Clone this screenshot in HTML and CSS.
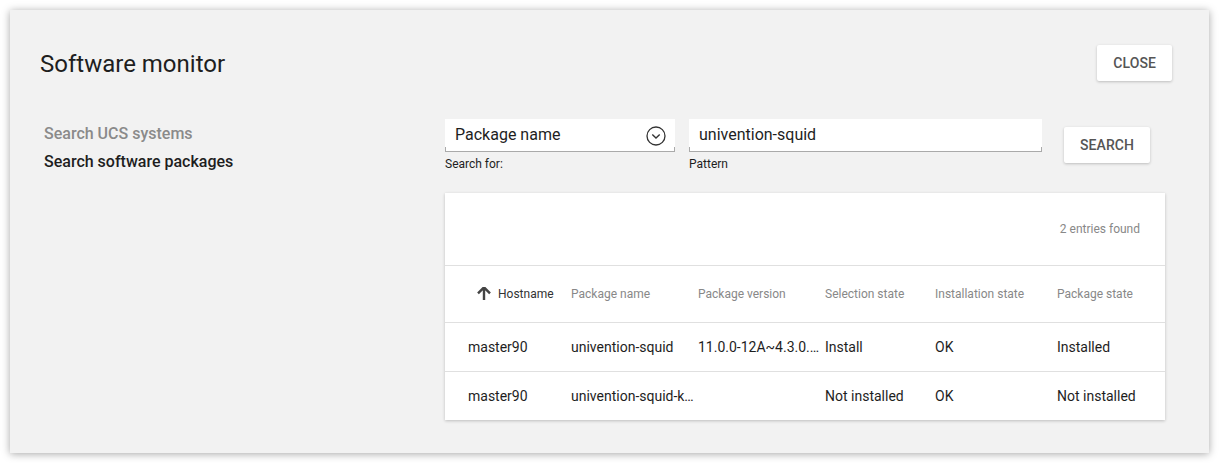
FILE: index.html
```html
<!DOCTYPE html>
<html lang="en">
<head>
<meta charset="utf-8">
<title>Software monitor</title>
<link rel="stylesheet" href="styles.css">
</head>
<body>
<div class="panel">
  <div class="header">
    <h1 class="title">Software monitor</h1>
    <button class="btn">CLOSE</button>
  </div>
  <div class="content">
    <nav class="nav">
      <div class="nav-item">Search UCS systems</div>
      <div class="nav-item active">Search software packages</div>
    </nav>
    <main class="main">
      <div class="search-row">
        <div class="field-wrap select-wrap">
          <div class="field">
            <span class="field-text">Package name</span>
            <svg class="drop-icon" width="20" height="20" viewBox="0 0 20 20"><circle cx="10" cy="10" r="9" fill="none" stroke="#333" stroke-width="1.3"/><path d="M6.3 8.6 L10 12.1 L13.7 8.6" fill="none" stroke="#333" stroke-width="1.4"/></svg>
          </div>
          <div class="label">Search for:</div>
        </div>
        <div class="field-wrap pattern-wrap">
          <div class="field">
            <span class="field-text">univention-squid</span>
          </div>
          <div class="label">Pattern</div>
        </div>
        <button class="btn search-btn">SEARCH</button>
      </div>
      <div class="grid">
        <div class="grid-status">2 entries found</div>
        <div class="grid-row grid-head">
          <div class="cell first sorted"><svg class="sort-icon" width="16" height="16" viewBox="0 0 16 16"><path d="M8 15 V2.5 M2 8.3 L8 2.3 L14 8.3" fill="none" stroke="#444" stroke-width="2.4"/></svg><span class="head-label">Hostname</span></div>
          <div class="cell">Package name</div>
          <div class="cell">Package version</div>
          <div class="cell">Selection state</div>
          <div class="cell">Installation state</div>
          <div class="cell">Package state</div>
        </div>
        <div class="grid-row">
          <div class="cell first">master90</div>
          <div class="cell">univention-squid</div>
          <div class="cell">11.0.0-12A~4.3.0.201803141531</div>
          <div class="cell">Install</div>
          <div class="cell">OK</div>
          <div class="cell">Installed</div>
        </div>
        <div class="grid-row">
          <div class="cell first">master90</div>
          <div class="cell">univention-squid-kerberos</div>
          <div class="cell"></div>
          <div class="cell">Not installed</div>
          <div class="cell">OK</div>
          <div class="cell">Not installed</div>
        </div>
      </div>
    </main>
  </div>
</div>
</body>
</html>
```

FILE: styles.css
```css
html, body {
  margin: 0;
  padding: 0;
  background: #ffffff;
}
body {
  padding: 10px;
  font-family: Roboto, "Liberation Sans", Arial, sans-serif;
  color: #1e1e1e;
}
.panel {
  box-sizing: border-box;
  width: 1199px;
  height: 443px;
  background: #f2f2f2;
  box-shadow: 0 1px 8px rgba(0, 0, 0, 0.35);
  padding: 35px 37px 0 30px;
}
.header {
  display: flex;
  justify-content: space-between;
  align-items: center;
  height: 36px;
}
.title {
  margin: 0;
  font-size: 24px;
  font-weight: 400;
  color: #1e1e1e;
  line-height: 36px;
  position: relative;
  top: 1px;
}
.btn {
  font-family: Roboto, "Liberation Sans", Arial, sans-serif;
  font-size: 14px;
  font-weight: 500;
  color: #555;
  background: #fff;
  border: none;
  border-radius: 2px;
  box-shadow: 0 1px 3px rgba(0, 0, 0, 0.22);
  height: 36px;
  padding: 0 16px;
  letter-spacing: 0.1px;
}
.content {
  display: flex;
  margin-top: 38px;
}
.nav {
  width: 405px;
  flex: none;
  padding-left: 4px;
  padding-top: 1px;
  box-sizing: border-box;
}
.nav-item {
  font-size: 16px;
  font-weight: 500;
  line-height: 28px;
  color: #8a8a8a;
}
.nav-item.active {
  color: #1e1e1e;
}
.main {
  width: 720px;
  flex: none;
}
.search-row {
  display: flex;
  align-items: flex-start;
}
.field-wrap {
  display: flex;
  flex-direction: column;
}
.select-wrap {
  width: 230px;
}
.pattern-wrap {
  width: 353px;
  margin-left: 14px;
}
.field {
  position: relative;
  height: 33px;
  background: #fff;
  display: flex;
  align-items: center;
  justify-content: space-between;
  padding: 0 10px;
  box-sizing: border-box;
}
.field::after {
  content: "";
  position: absolute;
  left: 0;
  right: 0;
  bottom: 0;
  height: 4px;
  border: 1px solid #aaa;
  border-top: none;
}
.field-text {
  font-size: 16px;
  color: #1e1e1e;
  line-height: 20px;
  margin-top: -1px;
}
.drop-icon {
  margin-right: -1px;
}
.label {
  font-size: 12px;
  line-height: 14px;
  margin-top: 5px;
  color: #1e1e1e;
}
.search-btn {
  margin-left: 22px;
  margin-top: 8px;
  width: 86px;
  padding: 0;
}
.grid {
  margin-top: 22px;
  background: #fff;
  box-shadow: 0 1px 3px rgba(0, 0, 0, 0.22);
}
.grid-status {
  height: 72px;
  display: flex;
  align-items: center;
  justify-content: flex-end;
  padding-right: 25px;
  font-size: 12px;
  color: #888;
  border-bottom: 1px solid #e0e0e0;
}
.grid-row {
  display: grid;
  grid-template-columns: 126px 127px 127px 110px 122px 1fr;
  height: 48px;
  align-items: center;
  border-bottom: 1px solid #e0e0e0;
  font-size: 14px;
}
.grid-row:last-child {
  border-bottom: none;
}
.grid-head {
  height: 56px;
  font-size: 12px;
  color: #888;
}
.cell {
  white-space: nowrap;
  overflow: hidden;
  text-overflow: ellipsis;
  padding-right: 3px;
}
.cell.first {
  padding-left: 23px;
}
.cell.sorted {
  padding-left: 31px;
  display: flex;
  align-items: center;
  color: #333;
}
.sort-icon {
  flex: none;
  margin-right: 6px;
  margin-top: -3px;
}
```
